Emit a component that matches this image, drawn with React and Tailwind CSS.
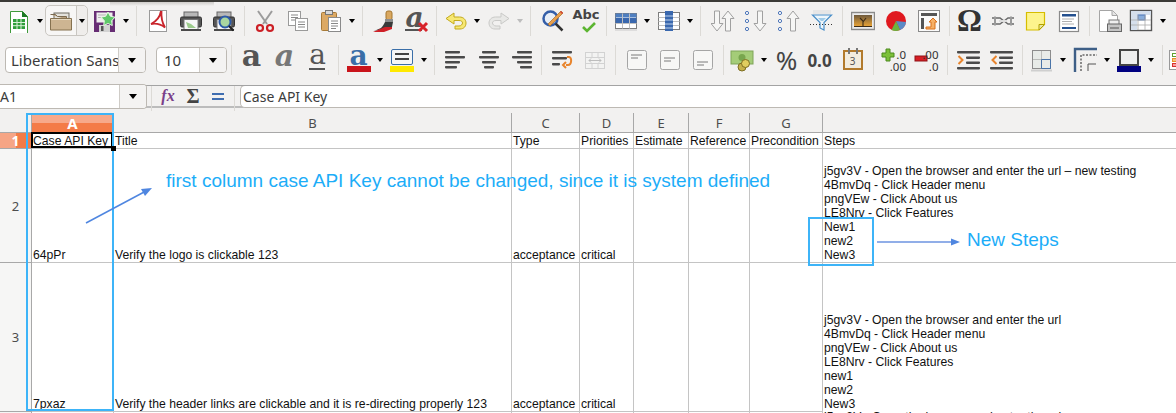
import React from "react";

const uiFont = { fontFamily: '"Noto Sans", "Open Sans", sans-serif' };

// small helpers for the toolbar slots
const Slot = ({ w = "w-[33px]", children }) => (
  <div className={`${w} shrink-0 h-full flex items-center justify-center`}>{children}</div>
);

const Arrow = ({ w = "w-[10px]", off }) => (
  <div className={`${w} shrink-0 h-full flex items-center justify-center`}>
    <div
      className={`w-0 h-0 border-l-[3.5px] border-r-[3.5px] border-t-[4px] border-l-transparent border-r-transparent ${
        off ? "border-t-[#bdbdbd]" : "border-t-black"
      }`}
    />
  </div>
);

const Sep = ({ w = "w-[8px]" }) => (
  <div className={`${w} shrink-0 h-full flex items-center justify-center`}>
    <div className="w-px h-[30px] bg-[#dcdad6]" />
  </div>
);

const Ico = ({ children, w = 24, h = 24 }) => (
  <svg width={w} height={h} viewBox={`0 0 ${w} ${h}`} fill="none">
    {children}
  </svg>
);

const NewSheet = () => (
  <Ico>
    <path d="M3.5 2.5h12l5 5v17h-17z" fill="#fff" stroke="#3f9a3a" />
    <path d="M15 2l6 6h-6z" fill="#1d7a25" />
    <rect x="6" y="10" width="12" height="10" fill="#2f9e3a" />
    <path d="M6 13.5h12M6 16.7h12M10 10v10M14 10v10" stroke="#d8f0d6" strokeWidth="1" />
  </Ico>
);

const Folder = () => (
  <Ico w={26}>
    <rect x="6" y="4" width="15" height="8" fill="#e4e2dc" stroke="#6f6a60" />
    <path d="M2.5 5.5h5l2 2h9v3" fill="#b79f7c" stroke="#7c6b50" />
    <path d="M2.5 9.5h21v11.5h-21z" fill="#cdb592" stroke="#85714f" />
    <path d="M3 10.5h20" stroke="#e6d8bf" />
  </Ico>
);

const SaveIcon = () => (
  <Ico>
    <rect x="1" y="2" width="21" height="21" fill="#672d74" />
    <rect x="3.5" y="3.5" width="16" height="10" fill="#eee" />
    <path d="M5 6h8M5 8.500h6" stroke="#b5b5b5" />
    <rect x="6" y="16" width="11" height="7" fill="#d3d3d3" />
    <rect x="8" y="17" width="2.500" height="5" fill="#555" />
    <path d="M15 3l2.300 4.200 4.700 1-3.300 3.500.6 4.800-4.300-2-4.300 2 .6-4.800L8 8.200l4.700-1z" fill="#5fc76a" stroke="#e8f8e4" />
  </Ico>
);

const PdfIcon = () => (
  <Ico>
    <rect x="3.5" y="1.500" width="17" height="21" fill="#fff" stroke="#9a9a9a" />
    <path d="M15 2c-1 6-4 10-10 13 5-1 9-.5 14 3.500-3-5-4-10-3.500-16.500" fill="none" stroke="#c9252c" strokeWidth="1.800" />
  </Ico>
);

const Printer = ({ lens }) => (
  <Ico>
    <rect x="5" y="3" width="14" height="6" fill="#b8b8b8" stroke="#666" />
    <rect x="1.500" y="8" width="21" height="10" rx="1.500" fill="#555" stroke="#333" />
    <rect x="5" y="10.500" width="14" height="11" fill="#f7f7f7" stroke="#777" />
    {!lens && <path d="M7 13l5 2 5 4H9z" fill="#9ccb8c" />}
    <rect x="2" y="20" width="20" height="2" fill="#4a4a4a" />
    {lens && (
      <>
        <circle cx="13" cy="13" r="5.500" fill="#a9d6a0" stroke="#2d5ba8" strokeWidth="2" />
        <path d="M17 17l4.500 4.500" stroke="#222" strokeWidth="2.200" />
      </>
    )}
  </Ico>
);

const Scissors = () => (
  <Ico>
    <path d="M5 2l9 13M19 2l-9 13" stroke="#9c9c9c" strokeWidth="2" />
    <circle cx="7" cy="19" r="3" stroke="#cc1f25" strokeWidth="2.200" />
    <circle cx="17" cy="19" r="3" stroke="#cc1f25" strokeWidth="2.200" />
  </Ico>
);

const CopyIcon = () => (
  <Ico>
    <rect x="2.500" y="2.500" width="12" height="14" fill="#fff" stroke="#9a9a9a" />
    <path d="M5 6h7M5 8.500h7M5 11h7" stroke="#888" />
    <rect x="9.500" y="9.500" width="12" height="12" fill="#fff" stroke="#9a9a9a" />
    <path d="M12 13h7M12 15.500h7M12 18h7" stroke="#888" />
  </Ico>
);

const PasteIcon = () => (
  <Ico>
    <rect x="2.500" y="3.500" width="15" height="18" rx="1" fill="#dca964" stroke="#a87a37" />
    <rect x="6.500" y="1.500" width="7" height="4" fill="#d9d9d9" stroke="#777" />
    <rect x="9.500" y="8.500" width="12" height="14" fill="#fff" stroke="#8a8a8a" />
    <path d="M12 12h7M12 14.500h7M12 17h7M12 19.500h5" stroke="#888" />
  </Ico>
);

const Brush = () => (
  <Ico>
    <rect x="14" y="2" width="6" height="9" rx="2" fill="#d9a75f" stroke="#a4762f" />
    <rect x="13" y="10" width="8" height="3" fill="#8d8d8d" />
    <path d="M13 13h8l-1 5-18 4 7-3c2-2 3-4 4-6z" fill="#3a3a3a" />
    <path d="M1 23l12-5h7v2l-8 3z" fill="#cf2027" />
  </Ico>
);

const GlyphA = ({ className }) => (
  <span className={`leading-none select-none ${className}`} style={{ fontFamily: '"DejaVu Serif", serif' }}>
    a
  </span>
);

const ClearFormat = () => (
  <div className="relative w-[24px] h-[24px] flex items-center justify-center">
    <span className="text-[28px] font-bold italic leading-none text-[#555] -mt-[6px] -ml-[4px]" style={{ fontFamily: '"DejaVu Serif", serif' }}>
      a
    </span>
    <div className="absolute left-0 bottom-[2px] w-[17px] h-[1.5px] bg-[#555]" />
    <svg className="absolute right-0 bottom-0" width="12" height="12" viewBox="0 0 12 12">
      <path d="M2 2l8 8M10 2l-8 8" stroke="#d8232a" strokeWidth="3" />
    </svg>
  </div>
);

const Undo = ({ flip, off }) => (
  <Ico>
    <g transform={flip ? "translate(24 0) scale(-1 1)" : undefined}>
      <path
        d="M10 4L2 9.500 10 15v-3.500h5c2.500 0 3.500 1.200 3.500 2.500S17 17 15 17h-4v3h5c4 0 6-2.800 6-6s-2.500-6-6.500-6H10z"
        fill={off ? "#e8e8e6" : "#f7e873"}
        stroke={off ? "#c9c9c7" : "#c2a91d"}
      />
    </g>
  </Ico>
);

const FindIcon = () => (
  <Ico>
    <circle cx="9.500" cy="9.500" r="7" fill="#e8eef6" stroke="#345ea8" strokeWidth="2.500" />
    <path d="M14.500 14.500l7 7" stroke="#333" strokeWidth="2.500" />
    <path d="M7 15L20 2l2 2L9 17z" fill="#e9a04d" stroke="#a86c24" strokeWidth=".7" />
    <path d="M20 2l2 2-1 1-2-2z" fill="#d8403a" />
  </Ico>
);

const AbcIcon = () => (
  <div className="relative w-[24px] h-[24px]">
    <span className="absolute -left-[1px] -top-[2px] text-[13px] font-bold text-[#444] leading-[16px]" style={{ fontFamily: '"DejaVu Sans", sans-serif' }}>
      Abc
    </span>
    <svg className="absolute left-[8px] top-[13px]" width="15" height="11" viewBox="0 0 15 11">
      <path d="M1 5l4 4 8-8" stroke="#5cb531" strokeWidth="2.600" fill="none" />
    </svg>
  </div>
);

const TableRows = () => (
  <Ico>
    <rect x="1.500" y="4.500" width="21" height="15" fill="#fff" stroke="#7d7d7d" />
    <rect x="1.500" y="9" width="21" height="5" fill="#3a68ae" />
    <rect x="1.500" y="4.500" width="21" height="4" fill="#4f7fc0" />
    <path d="M8.500 4.500v15M15.500 4.500v15M1.500 14.500h21" stroke="#c0c0c0" />
    <path d="M1 21h22" stroke="#c9c9c9" />
  </Ico>
);

const TableCols = () => (
  <Ico>
    <rect x="1.500" y="3.500" width="21" height="17" fill="#fff" stroke="#7d7d7d" />
    <path d="M1.500 8.500h21M1.500 12.500h21M1.500 16.500h21" stroke="#c0c0c0" />
    <rect x="8" y="2" width="8" height="20" fill="#3a68ae" />
    <path d="M8 7h8M8 11h8M8 15h8M8 19h8" stroke="#bcd0ea" />
  </Ico>
);

const UpDown = ({ d, x = 0 }) => (
  <path
    transform={`translate(${x} 0)`}
    d={d === "up" ? "M6 2l6 7.500H8.500V22h-5V9.500H0z" : "M6 22l6-7.500H8.500V2h-5v12.500H0z"}
    fill="#f6f6f5"
    stroke="#a0a0a0"
    strokeLinejoin="round"
  />
);

const SortIcon = () => (
  <Ico>
    <UpDown d="down" x={0} />
    <UpDown d="up" x={11} />
  </Ico>
);

const Dots = () => (
  <g stroke="#4a74b8" fill="#fff">
    <circle cx="3" cy="4" r="1.600" />
    <circle cx="3" cy="12" r="1.600" />
    <circle cx="3" cy="20" r="1.600" />
  </g>
);

const SortDots = ({ d }) => (
  <Ico>
    <Dots />
    <UpDown d={d} x={10} />
  </Ico>
);

const FilterIcon = () => (
  <Ico>
    <path d="M3 1h18v4H3z" fill="#e6e6e6" />
    <path d="M2.500 6h19l-7.500 7.500V21l-4-2v-5.500z" fill="#eef6fb" stroke="#4a8fc9" strokeWidth="1.200" />
    <path d="M8 9h8l-3 3h-2z" fill="#9fcbe8" />
    <path d="M0 15.500h24" stroke="#333" strokeDasharray="1 2" />
  </Ico>
);

const ImageIcon = () => (
  <Ico>
    <defs>
      <linearGradient id="dusk" x1="0" y1="0" x2="0" y2="1">
        <stop offset="0" stopColor="#6e5a3c" />
        <stop offset="1" stopColor="#f0a836" />
      </linearGradient>
    </defs>
    <rect x=".5" y="3.500" width="23" height="17" fill="#ececec" stroke="#8a8a8a" strokeWidth="1.400" />
    <rect x="3" y="6" width="18" height="12" fill="url(#dusk)" />
    <path d="M12 18v-6l-3-3M12 13l3-4M3 17.500h18" stroke="#3a2a18" strokeWidth="1.100" />
  </Ico>
);

const PieIcon = () => (
  <Ico>
    <circle cx="12" cy="12" r="10" fill="#e0191f" />
    <path d="M12 12L22 13a10 10 0 0 1-6 8z" fill="#5a8ac6" />
    <path d="M12 12l4 9a10 10 0 0 1-8.500 0z" fill="#6cb33f" />
  </Ico>
);

const PivotIcon = () => (
  <Ico>
    <rect x="1.500" y="1.500" width="21" height="21" fill="#fafafa" stroke="#8a8a8a" />
    <rect x="4" y="4" width="16" height="3" fill="#555" />
    <rect x="4" y="9" width="3" height="11" fill="#555" />
    <path d="M9 18h5v-5h-2l4-4 4 4h-2v7H9z" fill="#f6b067" stroke="#d9701a" />
  </Ico>
);

const LinkIcon = () => (
  <Ico>
    <path d="M1 9h8l4 3 4-3h6M1 15h8l4-3 4 3h6" stroke="#6a6a6a" strokeWidth="1.500" fill="none" />
    <path d="M4 7.500v9M20 7.500v9" stroke="#9a9a9a" strokeWidth="2" />
    <path d="M8 12h8" stroke="#ddd" strokeWidth="2" />
  </Ico>
);

const NoteIcon = () => (
  <Ico>
    <path d="M2.500 3.500h18v12l-5.500 5.500H2.500z" fill="#fdf48d" stroke="#d6bd00" strokeWidth="1.200" />
    <path d="M15 21v-5.500h5.500z" fill="#e8e6a0" stroke="#b2a100" />
  </Ico>
);

const HeaderIcon = () => (
  <Ico>
    <rect x="2.500" y="2.500" width="19" height="20" fill="#fff" stroke="#8a8a8a" strokeWidth="1.200" />
    <rect x="5" y="5" width="14" height="2.500" fill="#24508f" />
    <path d="M5 10h12M5 12.500h10M5 15h12" stroke="#b0b0b0" />
    <rect x="5" y="18" width="14" height="2" fill="#24508f" />
  </Ico>
);

const PrintPreview = () => (
  <Ico>
    <path d="M1.500 1.500h13l5 5v16h-18z" fill="#fff" stroke="#a5a5a5" />
    <path d="M14 1.500v5h5" stroke="#a5a5a5" fill="#e5e5e5" />
    <rect x="11" y="11" width="10" height="5" fill="#eee" stroke="#777" />
    <rect x="9.500" y="15" width="14" height="7.500" fill="#c4c4c4" stroke="#666" />
    <path d="M12 19h9" stroke="#555" />
  </Ico>
);

const FreezeIcon = () => (
  <Ico>
    <rect x="1.500" y="1.500" width="21" height="20" fill="#fff" stroke="#555" strokeWidth="1.400" />
    <rect x="2" y="2" width="6" height="19" fill="#d5dfec" />
    <rect x="2" y="2" width="20" height="4" fill="#d5dfec" />
    <rect x="9" y="6" width="7" height="5" fill="#8aaedb" stroke="#4a74b8" />
    <path d="M9 6v15M16 6v15M2 11h20M2 16h20" stroke="#aaa" strokeWidth=".8" />
  </Ico>
);

const BarsAlign = ({ rows }) => (
  <Ico w={22} h={20}>
    {rows.map(([x, w], i) => (
      <rect key={i} x={x} y={1 + i * 5} width={w} height="2.400" rx=".8" fill="#4a4a4a" />
    ))}
  </Ico>
);

const WrapIcon = () => (
  <Ico>
    <rect x="2" y="3" width="20" height="2.400" rx=".8" fill="#4a4a4a" />
    <rect x="2" y="9" width="15" height="2.400" rx=".8" fill="#4a4a4a" />
    <rect x="2" y="15" width="8" height="2.400" rx=".8" fill="#4a4a4a" />
    <path d="M17 9h2c3 0 3 8-1 8h-2M16 14l-3 3 3 3" stroke="#e8842c" strokeWidth="2" fill="none" />
  </Ico>
);

const MergeIcon = () => (
  <Ico>
    <rect x="2.500" y="4.500" width="19" height="16" fill="#f3f3f2" stroke="#d2d2d2" />
    <path d="M9 4.500v5M15 4.500v5M9 15.500v5M15 15.500v5M2.500 9.500h19M2.500 15.500h19" stroke="#d2d2d2" />
    <path d="M6 12.500h12M6 12.500l2-2M6 12.500l2 2M18 12.500l-2-2M18 12.500l-2 2" stroke="#bdbdbd" />
  </Ico>
);

const VAlign = ({ y }) => (
  <Ico w={22} h={22}>
    <rect x="1.500" y="1.500" width="19" height="19" rx="2" fill="#f7f7f6" stroke="#a5a5a5" />
    <path d={`M5 ${y}h11M5 ${y + 3}h7`} stroke="#7a7a7a" />
  </Ico>
);

const Currency = () => (
  <Ico>
    <rect x="1" y="3" width="22" height="13" fill="#a4cc78" stroke="#7fa558" />
    <circle cx="12" cy="9.500" r="3.500" fill="#78a64e" />
    <circle cx="12" cy="19" r="4" fill="#c6b14a" stroke="#7d6e22" />
    <circle cx="15.500" cy="15.500" r="4" fill="#e0cd5f" stroke="#7d6e22" />
  </Ico>
);

const DateIcon = () => (
  <div className="relative w-[20px] h-[20px] border-2 border-[#b27a2c] bg-[#f2ecdf] flex items-center justify-center">
    <span className="text-[10px] leading-none text-[#555] mt-[2px]" style={uiFont}>3</span>
    <div className="absolute -top-[4px] left-[3px] w-[2px] h-[6px] bg-[#777]" />
    <div className="absolute -top-[4px] right-[3px] w-[2px] h-[6px] bg-[#777]" />
  </div>
);

// the two number lines stack in a column beside the plus or minus sign
const Decimal = ({ add }) => (
  <div className="w-[24px] h-[24px] flex items-start justify-between">
    <svg className="-ml-[1px] shrink-0" width="14" height="14" viewBox="0 0 14 14">
      {add ? (
        <path d="M5 1h4v4h4v4H9v4H5V9H1V5h4z" fill="#7cc03a" stroke="#4c8a1e" />
      ) : (
        <rect x="1" y="8" width="12" height="5" fill="#d81e24" stroke="#8e1216" />
      )}
    </svg>
    <div className="flex flex-col items-end text-[11.5px] leading-[12px] text-[#333] pt-[1px] -ml-[6px]" style={uiFont}>
      <span className="block h-[12px]">{add ? ".0" : ".00"}</span>
      <span className="block h-[12px]">{add ? ".00" : ".0"}</span>
    </div>
  </div>
);

const Indent = ({ out }) => (
  <Ico w={24} h={20}>
    <rect x="0" y="1" width="23" height="2.400" rx=".8" fill="#4a4a4a" />
    <rect x="9" y="6.500" width="14" height="2.400" rx=".8" fill="#4a4a4a" />
    <rect x="9" y="11.500" width="14" height="2.400" rx=".8" fill="#4a4a4a" />
    <rect x="0" y="17" width="23" height="2.400" rx=".8" fill="#4a4a4a" />
    <path d={out ? "M6.500 6l-4 4 4 4" : "M1.500 6l4 4-4 4"} stroke="#e8842c" strokeWidth="2" fill="none" />
  </Ico>
);

const BordersIcon = () => (
  <Ico>
    <rect x="2.500" y="2.500" width="18" height="18" fill="#e8ebe8" stroke="#8d8d8d" />
    <path d="M11.500 2.500v9M2.500 11.500h9" stroke="#8d8d8d" strokeDasharray="1 1" />
    <path d="M11.500 11.500h9M11.500 11.500v9M20.500 11.500v9M11.500 20.500h9" stroke="#4a74a8" />
    <path d="M1 22.500h21" stroke="#cfcfcf" strokeWidth="2" />
  </Ico>
);

const BorderStyle = () => (
  <svg width="24" height="26" viewBox="0 0 24 26" fill="none">
    <path d="M2 25V2h22" stroke="#3e5f87" strokeWidth="2.400" />
    <path d="M8 24V8h16" stroke="#222" strokeDasharray="2 1.500" />
    <path d="M15 24v-7h8" stroke="#555" />
  </svg>
);

const BorderColor = () => (
  <div className="flex flex-col items-center">
    <div className="w-[20px] h-[17px] border-2 border-[#444] bg-[#eee]" />
    <div className="w-[24px] h-[6px] bg-[#000080]" />
  </div>
);

const CondFormat = () => (
  <div className="flex flex-col gap-[1px] border border-[#999] bg-white p-[2px] w-[18px]">
    <div className="h-[4px] border border-[#60a030]" />
    <div className="h-[4px] border border-[#e8902c] bg-[#f8c080]" />
    <div className="h-[4px] border border-[#d83030] bg-[#f8a0a0]" />
  </div>
);

const StyledA = ({ bar, children }) => (
  <div className="flex flex-col items-center">
    {children}
    <div className={`w-[24px] h-[6px] ${bar}`} />
  </div>
);

const Combo = ({ w, split, text, textClass = "" }) => (
  <div className={`${w} h-[26px] shrink-0 flex border border-[#bdb9b3] rounded-[4px] bg-white overflow-hidden`} style={uiFont}>
    <div className={`flex-1 min-w-0 overflow-hidden whitespace-nowrap text-[15px] leading-[24px] text-[#3c3c3c] ${textClass}`}>{text}</div>
    <div className={`${split} shrink-0 border-l border-[#cfccc7] bg-[#f4f3f2] flex items-center justify-center`}>
      <div className="w-0 h-0 border-l-[4.5px] border-r-[4.5px] border-t-[5px] border-l-transparent border-r-transparent border-t-black" />
    </div>
  </div>
);

const Toolbars = () => (
  <div className="relative bg-[#f2f1f0] border-b border-[#a3a3a3] h-[84px]">
    <div className="absolute left-[110px] top-0 w-[104px] h-[4px] bg-gradient-to-b from-[#cfcdca] to-[#f2f1f0]" />
    <div className="h-[37px] flex items-center pl-[2px]">
      <Slot><NewSheet /></Slot>
      <Arrow />
      <div className="w-[43px] h-[31px] shrink-0 flex items-center border border-[#c9c6c1] rounded-[5px] bg-[#f7f6f5]">
        <div className="w-[30px] flex justify-center"><Folder /></div>
        <div className="h-full border-l border-[#c9c6c1] flex-1 flex items-center justify-center rounded-r-[5px] bg-[#efedeb]">
          <div className="w-0 h-0 border-l-[3.5px] border-r-[3.5px] border-t-[4px] border-l-transparent border-r-transparent border-t-black" />
        </div>
      </div>
      <Slot><SaveIcon /></Slot>
      <Arrow />
      <Sep w="w-[10px]" />
      <Slot><PdfIcon /></Slot>
      <Slot><Printer /></Slot>
      <Slot><Printer lens /></Slot>
      <Sep />
      <Slot><Scissors /></Slot>
      <Slot><CopyIcon /></Slot>
      <Slot><PasteIcon /></Slot>
      <Arrow />
      <Sep w="w-[10px]" />
      <Slot><Brush /></Slot>
      <Slot><ClearFormat /></Slot>
      <Sep w="w-[7px]" />
      <Slot w="w-[32px]"><Undo /></Slot>
      <Arrow />
      <Slot><Undo flip off /></Slot>
      <Arrow off />
      <Sep w="w-[11px]" />
      <Slot><FindIcon /></Slot>
      <Slot><AbcIcon /></Slot>
      <Sep />
      <Slot w="w-[32px]"><TableRows /></Slot>
      <Arrow />
      <Slot><TableCols /></Slot>
      <Arrow />
      <Sep w="w-[11px]" />
      <Slot><SortIcon /></Slot>
      <Slot><SortDots d="down" /></Slot>
      <Slot><SortDots d="up" /></Slot>
      <Slot><FilterIcon /></Slot>
      <Sep />
      <Slot><ImageIcon /></Slot>
      <Slot><PieIcon /></Slot>
      <Slot><PivotIcon /></Slot>
      <Sep />
      <Slot><span className="text-[31px] font-bold text-[#333] leading-none" style={{ fontFamily: '"Liberation Serif", serif' }}>Ω</span></Slot>
      <Slot><LinkIcon /></Slot>
      <Slot><NoteIcon /></Slot>
      <Slot><HeaderIcon /></Slot>
      <Sep />
      <Slot><PrintPreview /></Slot>
      <Slot w="w-[30px]"><FreezeIcon /></Slot>
      <Arrow w="w-[14px]" />
    </div>
    <div className="h-[42px] flex items-center pl-[5px]">
      <Combo w="w-[141px]" split="w-[27px]" text="Liberation Sans" textClass="pl-[5px]" />
      <div className="w-[10px] shrink-0" />
      <Combo w="w-[71px]" split="w-[27px]" text="10" textClass="pl-[7px]" />
      <Sep />
      <Slot><GlyphA className="text-[30px] font-bold text-[#555] -mt-[8px]" /></Slot>
      <Slot><GlyphA className="text-[30px] italic font-bold text-[#777] -mt-[8px]" /></Slot>
      <Slot>
        <div className="flex flex-col items-center">
          <GlyphA className="text-[28px] text-[#555] -mt-[9px]" />
          <div className="w-[16px] h-[2px] bg-[#555] -mt-[1px]" />
        </div>
      </Slot>
      <Sep w="w-[9px]" />
      <Slot w="w-[31px]">
        <StyledA bar="bg-[#c9141b]"><GlyphA className="text-[28px] font-bold text-[#3a6ea8] -mt-[7px] h-[24px]" /></StyledA>
      </Slot>
      <Arrow w="w-[11px]" />
      <Slot w="w-[34px]">
        <div className="flex flex-col items-center">
          <div className="w-[22px] h-[16px] border border-[#3a6ea8] rounded-[2px] bg-[#f6f6f6] flex flex-col justify-center gap-[3px] px-[3px] mb-[1px]">
            <div className="h-[2px] bg-[#444]" />
            <div className="h-[2px] bg-[#444]" />
          </div>
          <div className="w-[24px] h-[6px] bg-[#ffe900]" />
        </div>
      </Slot>
      <Arrow />
      <Sep w="w-[10px]" />
      <Slot><BarsAlign rows={[[0, 15], [0, 20], [0, 15], [0, 12]]} /></Slot>
      <Slot><BarsAlign rows={[[4, 14], [1, 20], [4, 14], [6, 10]]} /></Slot>
      <Slot><BarsAlign rows={[[6, 15], [1, 20], [6, 15], [9, 12]]} /></Slot>
      <Sep w="w-[7px]" />
      <Slot><WrapIcon /></Slot>
      <Slot><MergeIcon /></Slot>
      <Sep w="w-[9px]" />
      <Slot><VAlign y={6} /></Slot>
      <Slot><VAlign y={9} /></Slot>
      <Slot><VAlign y={13} /></Slot>
      <Sep />
      <Slot w="w-[30px]"><Currency /></Slot>
      <Arrow w="w-[13px]" />
      <Slot><span className="text-[26px] text-[#444] leading-none" style={uiFont}>%</span></Slot>
      <Slot><span className="text-[17px] font-bold text-[#444] leading-none" style={uiFont}>0.0</span></Slot>
      <Slot><DateIcon /></Slot>
      <Sep w="w-[9px]" />
      <Slot w="w-[32px]"><Decimal add /></Slot>
      <Slot><Decimal /></Slot>
      <Sep w="w-[9px]" />
      <Slot><Indent /></Slot>
      <Slot><Indent out /></Slot>
      <Sep w="w-[9px]" />
      <Slot w="w-[30px]"><BordersIcon /></Slot>
      <Arrow w="w-[12px]" />
      <Slot w="w-[32px]"><BorderStyle /></Slot>
      <Arrow w="w-[12px]" />
      <Slot w="w-[32px]"><BorderColor /></Slot>
      <Arrow w="w-[12px]" />
      <Sep w="w-[10px]" />
      <div className="shrink-0 ml-[2px]"><CondFormat /></div>
    </div>
  </div>
);

const FormulaBar = () => (
  <div className="h-[22px] flex items-center bg-[#f2f1f0] border-b-2 border-[#bcbcbc]" style={uiFont}>
    <div className="w-[147px] h-[25px] shrink-0 flex border border-l-0 border-[#bdb9b3] rounded-r-[4px] bg-white overflow-hidden relative z-10">
      <div className="flex-1 text-[14px] leading-[24px] text-[#3c3c3c]">A1</div>
      <div className="w-[27px] border-l border-[#cfccc7] bg-[#f4f3f2] flex items-center justify-center">
        <div className="w-0 h-0 border-l-[4.5px] border-r-[4.5px] border-t-[5px] border-l-transparent border-r-transparent border-t-black" />
      </div>
    </div>
    <Sep w="w-[9px]" />
    <Slot w="w-[24px]">
      <span className="text-[16px] font-bold italic text-[#7a3f8a] leading-none" style={{ fontFamily: '"Liberation Serif", serif' }}>fx</span>
    </Slot>
    <Slot w="w-[26px]">
      <span className="text-[20px] font-bold text-[#444] leading-none" style={{ fontFamily: '"Liberation Serif", serif' }}>Σ</span>
    </Slot>
    <Slot w="w-[24px]">
      <div className="flex flex-col gap-[3px]">
        <div className="w-[12px] h-[2px] bg-[#3f6db0]" />
        <div className="w-[12px] h-[2px] bg-[#3f6db0]" />
      </div>
    </Slot>
    <Sep w="w-[9px]" />
    <div className="flex-1 h-[23px] ml-[1px] border border-r-0 border-[#bdb9b3] rounded-l-[5px] bg-white text-[14px] leading-[21px] pl-[2px] text-[#3c3c3c]">
      Case API Key
    </div>
  </div>
);

const cols = ["B", "C", "D", "E", "F", "G"];

const Cell = ({ className = "", children }) => (
  <div className={`border-r border-b border-[#c4c4c4] bg-white flex items-end pl-[1px] text-[12.2px] leading-[14px] text-[#111] whitespace-nowrap ${className}`}>
    <span>{children}</span>
  </div>
);

const RowHead = ({ n }) => (
  <div className="bg-[#f6f6f5] border-r border-b border-[#a8a8a8] flex items-center justify-center pt-[2px] text-[13px] text-[#4d4d4d]" style={uiFont}>
    {n}
  </div>
);

const Steps = ({ lines }) => (
  <div className="border-b border-[#c4c4c4] bg-white flex items-end pl-[1px] text-[12.2px] leading-[14px] text-[#111] whitespace-nowrap">
    <div>
      {lines.map((l, i) => (
        <div key={i}>{l}</div>
      ))}
    </div>
  </div>
);

const Sheet = () => (
  <div className="pt-[5px] bg-[#f2f1f0]" style={{ fontFamily: '"Liberation Sans", Arial, sans-serif' }}>
    <div className="grid grid-cols-[32px_82px_398px_68px_54px_55px_61px_73px_1fr] grid-rows-[20px_16px_114px_149px_40px]">
      {/* column headers */}
      <div className="border-r border-b border-[#a8a8a8] bg-[#f2f1f0]" />
      <div className="relative border-r border-b border-[#a8a8a8] bg-[#f47b47] flex items-center justify-center pt-[2px]">
        <div className="absolute inset-x-0 top-0 h-[10px] bg-[#f7a98a]" />
        <span className="relative text-[15px] font-bold text-white leading-none" style={uiFont}>A</span>
      </div>
      {cols.map((c) => (
        <div key={c} className="border-r border-b border-[#a8a8a8] bg-[#f2f1f0] flex items-center justify-center pt-[2px] text-[13px] text-[#4d4d4d]" style={uiFont}>
          {c}
        </div>
      ))}
      <div className="border-b border-[#a8a8a8] bg-[#f2f1f0]" />

      {/* row 1 */}
      <div className="relative border-r border-b border-[#a8a8a8] bg-[#f37b47] flex items-center justify-center">
        <div className="absolute inset-y-0 left-0 w-[16px] bg-[#f6a585]" />
        <span className="relative text-[14px] font-bold text-white leading-none" style={uiFont}>1</span>
      </div>
      <Cell className="relative">
        Case API Key
        <div className="absolute -left-px -top-px right-0 bottom-0 border-2 border-black pointer-events-none" />
        <div className="absolute -right-[3px] -bottom-[3px] w-[5px] h-[5px] bg-black z-10" />
      </Cell>
      <Cell>Title</Cell>
      <Cell>Type</Cell>
      <Cell>Priorities</Cell>
      <Cell>Estimate</Cell>
      <Cell>Reference</Cell>
      <Cell>Precondition</Cell>
      <Steps lines={["Steps"]} />

      {/* row 2 */}
      <RowHead n="2" />
      <Cell>64pPr</Cell>
      <Cell>Verify the logo is clickable 123</Cell>
      <Cell>acceptance</Cell>
      <Cell>critical</Cell>
      <Cell />
      <Cell />
      <Cell />
      <Steps
        lines={[
          "j5gv3V - Open the browser and enter the url – new testing",
          "4BmvDq - Click Header menu",
          "pngVEw - Click About us",
          "LE8Nrv - Click Features",
          "New1",
          "new2",
          "New3",
        ]}
      />

      {/* row 3 */}
      <RowHead n="3" />
      <Cell>7pxaz</Cell>
      <Cell>Verify the header links are clickable and it is re-directing properly 123</Cell>
      <Cell>acceptance</Cell>
      <Cell>critical</Cell>
      <Cell />
      <Cell />
      <Cell />
      <Steps
        lines={[
          "j5gv3V - Open the browser and enter the url",
          "4BmvDq - Click Header menu",
          "pngVEw - Click About us",
          "LE8Nrv - Click Features",
          "new1",
          "new2",
          "New3",
        ]}
      />

      {/* row 4, only its top edge is in view */}
      <div className="bg-[#f6f6f5] border-r border-[#a8a8a8]" />
      <div className="border-r border-[#c4c4c4] bg-white" />
      <div className="border-r border-[#c4c4c4] bg-white" />
      <div className="border-r border-[#c4c4c4] bg-white" />
      <div className="border-r border-[#c4c4c4] bg-white" />
      <div className="border-r border-[#c4c4c4] bg-white" />
      <div className="border-r border-[#c4c4c4] bg-white" />
      <div className="border-r border-[#c4c4c4] bg-white" />
      <div className="bg-white pl-[1px] text-[12.2px] leading-[14px] -mt-[2px] text-[#111] whitespace-nowrap">
        j5gv3V - Open the browser and enter the url
      </div>
    </div>
  </div>
);

// annotations someone drew on top of the screenshot
const Notes = () => (
  <>
    <div className="absolute left-[26px] top-[113px] w-[88px] h-[298px] border-[2px] border-[#3db4f8]" />
    <div className="absolute left-[808px] top-[217px] w-[66px] h-[49px] border-[2px] border-[#3db4f8]" />
    <svg className="absolute left-0 top-0" width="1176" height="413" fill="none">
      <path d="M86 223L146 191" stroke="#4f86e0" strokeWidth="1.500" />
      <path d="M152 188l-11 1 4 7z" fill="#4f86e0" />
      <path d="M877 242H952" stroke="#6c93e0" strokeWidth="1.500" />
      <path d="M960 242l-9-3.500v7z" fill="#4f86e0" />
    </svg>
    <div className="absolute left-[166px] top-[170px] text-[19px] leading-[21px] text-[#1cadf8] whitespace-nowrap" style={{ fontFamily: '"Liberation Sans", Arial, sans-serif' }}>
      first column case API Key cannot be changed, since it is system defined
    </div>
    <div className="absolute left-[967px] top-[229px] text-[19px] leading-[21px] text-[#1cadf8] whitespace-nowrap" style={{ fontFamily: '"Liberation Sans", Arial, sans-serif' }}>
      New Steps
    </div>
  </>
);

export default function App() {
  return (
    <div className="relative w-[1176px] h-[413px] overflow-hidden bg-white">
      <div className="h-[2px] bg-[#3c3b37]" />
      <Toolbars />
      <FormulaBar />
      <Sheet />
      <Notes />
    </div>
  );
}
